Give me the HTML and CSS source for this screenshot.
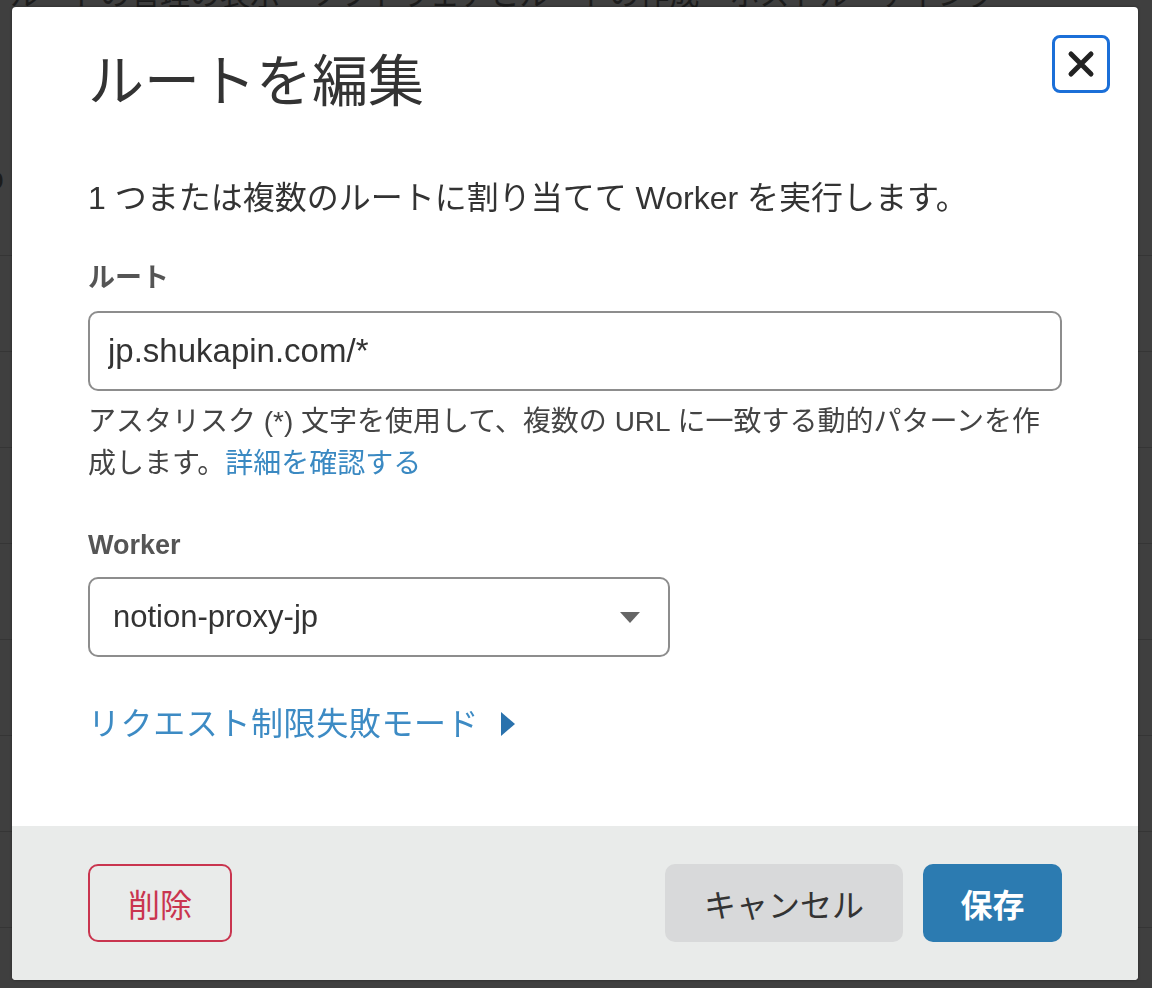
FILE: index.html
```html
<!DOCTYPE html>
<html lang="ja">
<head>
<meta charset="utf-8">
<title>ルートを編集</title>
<link rel="stylesheet" href="styles.css">
</head>
<body>
<div class="page">
    <div class="page-head">ルートの管理の表示　ソフトウェアとルートの作成　ホストルーティング</div>
    <div class="page-rows">
        <div class="row">o</div>
        <div class="row"></div>
        <div class="row"></div>
        <div class="row"></div>
        <div class="row"></div>
        <div class="row"></div>
        <div class="row"></div>
        <div class="row"></div>
    </div>
</div>

<div class="overlay">
    <div class="modal">
        <button class="close" type="button" aria-label="閉じる">
            <svg width="30" height="30" viewBox="0 0 30 30">
                <path d="M5 5 L25 25 M25 5 L5 25" stroke="#222" stroke-width="5" stroke-linecap="round"/>
            </svg>
        </button>

        <div class="modal-body">
            <h1>ルートを編集</h1>
            <p class="desc">1 つまたは複数のルートに割り当てて Worker を実行します。</p>

            <label class="field-label" for="route">ルート</label>
            <input class="text-input" id="route" type="text" value="jp.shukapin.com/*" readonly>
            <p class="help">アスタリスク (*) 文字を使用して、複数の URL に一致する動的パターンを作成します。<a href="#">詳細を確認する</a></p>

            <label class="field-label field-label-worker">Worker</label>
            <div class="select">
                <span>notion-proxy-jp</span>
                <svg width="20" height="11" viewBox="0 0 20 11"><path d="M0 0 H20 L10 11 Z" fill="#666"/></svg>
            </div>

            <a class="toggle" href="#">リクエスト制限失敗モード
                <svg width="14" height="24" viewBox="0 0 14 24"><path d="M0 0 L14 12 L0 24 Z" fill="#2a72ad"/></svg>
            </a>
        </div>

        <div class="modal-foot">
            <button class="btn btn-danger" type="button">削除</button>
            <div class="foot-right">
                <button class="btn btn-cancel" type="button">キャンセル</button>
                <button class="btn btn-save" type="button">保存</button>
            </div>
        </div>
    </div>
</div>
</body>
</html>
```

FILE: styles.css
```css
html, body {
    margin: 0;
    height: 100%;
}
body {
    background: #3f3f3f;
    font-family: "Liberation Sans", "Noto Sans CJK JP", sans-serif;
    color: #333;
    overflow: hidden;
}

/* dimmed page behind the dialog */
.page {
    color: #1c1c1c;
}
.page-head {
    font-size: 30px;
    line-height: 30px;
    margin-top: -20px;
    padding-left: 10px;
    white-space: nowrap;
}
.page-rows {
    margin-top: 150px;
}
.row {
    height: 95px;
    border-bottom: 1px solid #353535;
    font-size: 32px;
    margin-left: -14px;
}

.overlay {
    position: fixed;
    top: 0;
    left: 0;
    right: 0;
    bottom: 0;
    display: flex;
    padding: 7px 14px 8px 12px;
}
.modal {
    position: relative;
    flex: 1;
    display: flex;
    flex-direction: column;
    background: #fff;
    border-radius: 4px;
    overflow: hidden;
    box-shadow: 0 0 3px rgba(0, 0, 0, 0.4);
}

.close {
    position: absolute;
    top: 28px;
    right: 28px;
    width: 58px;
    height: 58px;
    padding: 0;
    display: flex;
    align-items: center;
    justify-content: center;
    background: #fff;
    border: 3px solid #1b6fd8;
    border-radius: 8px;
}

.modal-body {
    flex: 1;
    padding: 41px 76px 0 76px;
}
h1 {
    margin: 0;
    font-size: 56px;
    line-height: 68px;
    font-weight: normal;
    color: #333;
}
.desc {
    margin: 60px 0 0 0;
    font-size: 32px;
    line-height: 44px;
    color: #333;
}
.field-label {
    display: block;
    margin-top: 40px;
    font-size: 27px;
    line-height: 36px;
    font-weight: bold;
    color: #555;
}
.field-label-worker {
    margin-top: 42px;
}
.text-input {
    display: block;
    box-sizing: border-box;
    width: 100%;
    height: 80px;
    margin-top: 15px;
    padding: 0 18px;
    font-family: inherit;
    font-size: 33px;
    color: #333;
    border: 2px solid #8d8d8d;
    border-radius: 10px;
    outline: none;
}
.help {
    margin: 10px 0 0 0;
    font-size: 28px;
    line-height: 42px;
    color: #444;
}
.help a {
    color: #3a89c2;
    text-decoration: none;
}
.select {
    box-sizing: border-box;
    width: 582px;
    height: 80px;
    margin-top: 14px;
    padding: 0 28px 0 23px;
    display: flex;
    align-items: center;
    justify-content: space-between;
    font-size: 31px;
    color: #333;
    border: 2px solid #8d8d8d;
    border-radius: 10px;
}
.toggle {
    display: flex;
    align-items: center;
    gap: 22px;
    margin-top: 45px;
    font-size: 32px;
    line-height: 44px;
    letter-spacing: 0.6px;
    color: #3d8bc4;
    text-decoration: none;
}

.modal-foot {
    height: 154px;
    box-sizing: border-box;
    padding: 38px 76px;
    display: flex;
    justify-content: space-between;
    background: #e9ebea;
}
.foot-right {
    display: flex;
    gap: 20px;
}
.btn {
    height: 78px;
    font-family: inherit;
    font-size: 32px;
    border-radius: 10px;
    padding: 0;
    cursor: pointer;
}
.btn-danger {
    width: 144px;
    background: transparent;
    color: #c9354f;
    border: 2px solid #c9354f;
}
.btn-cancel {
    width: 238px;
    background: #d8d9da;
    color: #333;
    border: none;
}
.btn-save {
    width: 139px;
    background: #2c7bb1;
    color: #fff;
    font-weight: bold;
    border: none;
}
```
